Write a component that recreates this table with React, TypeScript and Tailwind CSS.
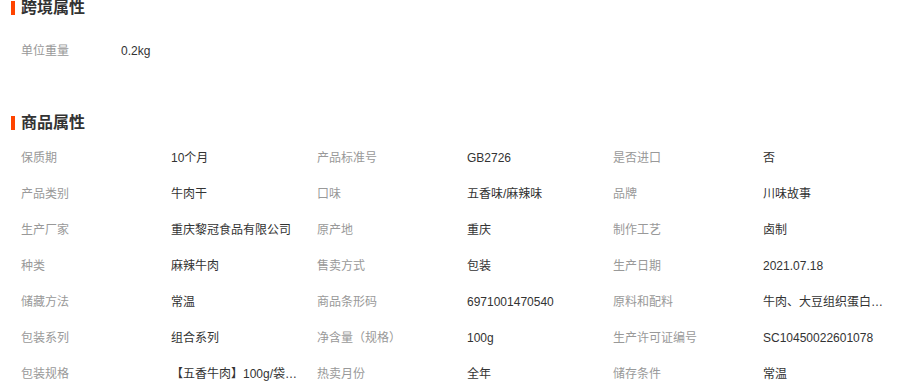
const crossBorder: [string, string][] = [["单位重量", "0.2kg"]];

const productAttrs: [string, string][] = [
  ["保质期", "10个月"],
  ["产品标准号", "GB2726"],
  ["是否进口", "否"],
  ["产品类别", "牛肉干"],
  ["口味", "五香味/麻辣味"],
  ["品牌", "川味故事"],
  ["生产厂家", "重庆黎冠食品有限公司"],
  ["原产地", "重庆"],
  ["制作工艺", "卤制"],
  ["种类", "麻辣牛肉"],
  ["售卖方式", "包装"],
  ["生产日期", "2021.07.18"],
  ["储藏方法", "常温"],
  ["商品条形码", "6971001470540"],
  ["原料和配料", "牛肉、大豆组织蛋白、食用盐、白砂糖"],
  ["包装系列", "组合系列"],
  ["净含量（规格）", "100g"],
  ["生产许可证编号", "SC10450022601078"],
  ["包装规格", "【五香牛肉】100g/袋，【麻辣牛肉】100g/袋"],
  ["热卖月份", "全年"],
  ["储存条件", "常温"],
];

function SectionTitle({ title }: { title: string }) {
  return (
    <div className="flex h-[20px] items-center pl-[11px]">
      <span className="mr-[6px] h-[14px] w-[4px] bg-[#ff4400]" />
      <span className="text-[16px] font-bold leading-[20px] text-[#333]">
        {title}
      </span>
    </div>
  );
}

export default function App() {
  return (
    <div
      className="h-[387px] w-[902px] overflow-hidden bg-white"
      style={{ fontFamily: '"Liberation Sans", Arial, "Noto Sans CJK SC", sans-serif' }}
    >
      <div className="-mt-[2px]">
        <SectionTitle title="跨境属性" />
        <div className="mt-[15px] pl-[21px] text-[12px] leading-[36px]">
          {crossBorder.map(([label, value]) => (
            <div key={label} className="flex">
              <span className="w-[100px] text-[#999]">{label}</span>
              <span className="text-[#333]">{value}</span>
            </div>
          ))}
        </div>

        <div className="mt-[44px]">
          <SectionTitle title="商品属性" />
        </div>
        <div className="mt-[7px] grid grid-cols-[150px_146px_150px_146px_150px_146px] pl-[21px] text-[12px] leading-[36px]">
          {productAttrs.map(([label, value]) => (
            <div key={label} className="contents">
              <span className="whitespace-nowrap text-[#999]">{label}</span>
              <span className="max-w-[128px] overflow-hidden text-ellipsis whitespace-nowrap text-[#333]">
                {value}
              </span>
            </div>
          ))}
        </div>
      </div>
    </div>
  );
}
